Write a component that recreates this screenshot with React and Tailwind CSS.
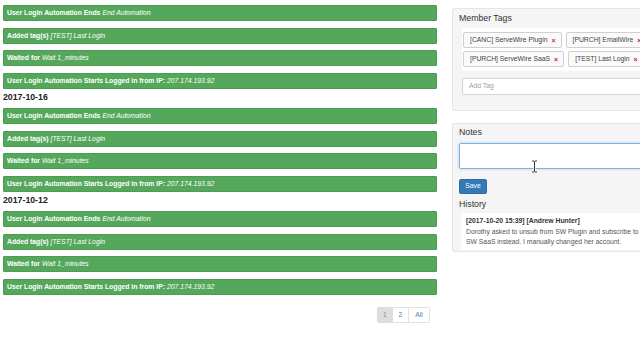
const groups = [
  { date: null },
  { date: "2017-10-16" },
  { date: "2017-10-12" },
];

const events = [
  { label: "User Login Automation Ends", detail: "End Automation" },
  { label: "Added tag(s)", detail: "[TEST] Last Login" },
  { label: "Waited for", detail: "Wait 1_minutes" },
  { label: "User Login Automation Starts Logged in from IP:", detail: "207.174.193.92" },
];

const tags = [
  "[CANC] ServeWire Plugin",
  "[PURCH] EmailWire",
  "[PURCH] ServeWire SaaS",
  "[TEST] Last Login",
];

function EventBar({ label, detail }) {
  return (
    <div className="h-[16px] mb-[6.5px] bg-[#55a85b] border border-[#4d9c52] rounded-[1px] px-[3px] flex items-center text-white text-[6.8px] leading-[14px] whitespace-nowrap">
      <span className="font-bold">{label}</span>
      <span className="italic ml-[2px]">{detail}</span>
    </div>
  );
}

function Tag({ text }) {
  return (
    <div className="h-[16px] flex items-center bg-[#fafafa] border border-[#cfcfcf] rounded-[2px] pl-[6px] pr-[5px] text-[6.8px] text-[#444] whitespace-nowrap">
      <span>{text}</span>
      <span className="ml-[4px] text-[#b0302c] font-bold text-[7px] leading-none">×</span>
    </div>
  );
}

export default function App() {
  return (
    <div className="relative w-[640px] h-[360px] overflow-hidden bg-white flex font-['Liberation_Sans',Arial,sans-serif]">
      <div className="ml-[3px] w-[434px] shrink-0 pt-[5px]">
        {groups.map((g, i) => (
          <div key={i}>
            {g.date ? (
              <div className="text-[8.75px] font-bold leading-[11px] -mt-[3px] mb-[5px] text-[#222]">
                {g.date}
              </div>
            ) : null}
            {events.map((e) => (
              <EventBar key={e.label} label={e.label} detail={e.detail} />
            ))}
          </div>
        ))}
        <div className="flex justify-end mt-[12px] mr-[7px] text-[6.8px] leading-[14px]">
          <div className="w-[16px] h-[16px] flex items-center justify-center bg-[#dddddd] border border-[#dddddd] rounded-l-[2px] text-[#888]">
            1
          </div>
          <div className="w-[16px] h-[16px] flex items-center justify-center bg-white border border-l-0 border-[#e2e2e2] text-[#4a7fb5]">
            2
          </div>
          <div className="w-[21px] h-[16px] flex items-center justify-center bg-white border border-l-0 border-[#e2e2e2] rounded-r-[2px] text-[#4a7fb5]">
            All
          </div>
        </div>
      </div>

      <div className="ml-[15px] w-[210px] shrink-0 pt-[8px]">
        <div className="bg-[#f5f5f5] border border-[#e6e6e6] rounded-[2px] px-[6px] pt-[4px] pb-[15px]">
          <div className="text-[8.75px] leading-[10px] text-[#333]">Member Tags</div>
          <div className="ml-[3px] mt-[5px] bg-white px-[1px] pt-[4px] pb-[4px] flex flex-wrap gap-x-[4px] gap-y-[3px]">
            {tags.map((t) => (
              <Tag key={t} text={t} />
            ))}
          </div>
          <div className="ml-[3px] mt-[7px] h-[17px] bg-white border border-[#d4d4d4] rounded-[2px] pl-[6px] flex items-center text-[6.8px] text-[#a0a0a0]">
            Add Tag
          </div>
        </div>

        <div className="mt-[12px] bg-[#f5f5f5] border border-[#e6e6e6] rounded-[2px] px-[6px] pt-[3px] pb-[1px]">
          <div className="text-[8.75px] leading-[10px] text-[#333]">Notes</div>
          <div className="mt-[6px] h-[26px] bg-white border border-[#7fb3e2] rounded-[2px] shadow-[0_0_3px_rgba(102,175,233,0.6)]"></div>
          <div className="mt-[10px] w-[28px] h-[15px] bg-[#337ab7] border border-[#2e6da4] rounded-[2px] flex items-center justify-center text-white text-[6.8px]">
            Save
          </div>
          <div className="mt-[5px] text-[8.75px] leading-[10px] text-[#333]">History</div>
          <div className="mt-[4px] ml-[2px] bg-white pl-[5px] pt-[3px] pb-[2px] text-[6.8px] leading-[10.5px] text-[#555]">
            <div className="font-bold text-[#333]">[2017-10-20 15:39] [Andrew Hunter]</div>
            <div className="w-[180px]">
              Dorothy asked to unsub from SW Plugin and subscribe to SW SaaS instead. I manually changed her account.
            </div>
          </div>
        </div>
      </div>

      <svg className="absolute left-[531px] top-[160px]" width="7" height="13" viewBox="0 0 7 13">
        <path d="M1 1h2l.5.5L4 1h2M3.5 1.5v10M1 12h2l.5-.5L4 12h2" fill="none" stroke="#fff" strokeWidth="2.2" />
        <path d="M1 1h2l.5.5L4 1h2M3.5 1.5v10M1 12h2l.5-.5L4 12h2" fill="none" stroke="#333" strokeWidth="1" />
      </svg>
    </div>
  );
}
